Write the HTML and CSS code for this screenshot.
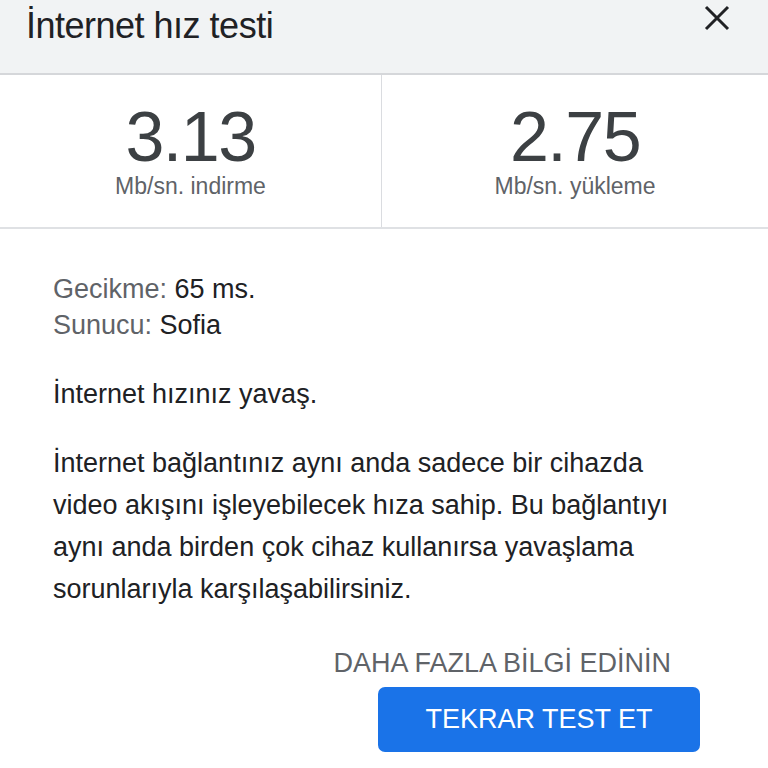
FILE: index.html
```html
<!DOCTYPE html>
<html lang="tr">
<head>
<meta charset="utf-8">
<link rel="stylesheet" href="styles.css">
</head>
<body>
<div class="dialog">
  <header class="head">
    <h1 class="title">İnternet hız testi</h1>
    <button class="close" aria-label="Kapat">
      <svg width="26" height="26" viewBox="0 0 26 26"><path d="M2 2 L24 24 M24 2 L2 24" stroke="#202124" stroke-width="3" fill="none"/></svg>
    </button>
  </header>
  <section class="stats">
    <div class="stat">
      <div class="num">3.13</div>
      <div class="unit">Mb/sn. indirme</div>
    </div>
    <div class="stat">
      <div class="num">2.75</div>
      <div class="unit">Mb/sn. yükleme</div>
    </div>
  </section>
  <section class="body">
    <div class="meta">
      <div><span class="lbl">Gecikme:</span> 65 ms.</div>
      <div><span class="lbl">Sunucu:</span> Sofia</div>
    </div>
    <p class="verdict">İnternet hızınız yavaş.</p>
    <p class="desc">İnternet bağlantınız aynı anda sadece bir cihazda video akışını işleyebilecek hıza sahip. Bu bağlantıyı aynı anda birden çok cihaz kullanırsa yavaşlama sorunlarıyla karşılaşabilirsiniz.</p>
    <div class="actions">
      <a class="more">DAHA FAZLA BİLGİ EDİNİN</a>
      <button class="retry">TEKRAR TEST ET</button>
    </div>
  </section>
</div>
</body>
</html>
```
FILE: styles.css
```css
* { box-sizing: border-box; }
html, body { margin: 0; padding: 0; background: #fff; }
body { font-family: "Liberation Sans", Arial, sans-serif; color: #202124; width: 768px; height: 768px; overflow: hidden; }
.dialog { width: 768px; }
.head {
  height: 75px;
  background: #f1f3f4;
  border-bottom: 2px solid #d5d7da;
  display: flex;
  align-items: flex-start;
  justify-content: space-between;
  padding: 0 38px 0 26px;
}
.title {
  margin: 0;
  margin-top: 6px;
  font-weight: normal;
  font-size: 36px;
  line-height: 40px;
  color: #202124;
  letter-spacing: -0.5px;
}
.close {
  margin-top: 5px;
  border: 0; background: none; padding: 0;
  width: 26px; height: 26px;
}
.stats {
  display: grid;
  grid-template-columns: 381px 1fr;
  border-bottom: 2px solid #dfe1e4;
  height: 154px;
}
.stat {
  display: flex; flex-direction: column; align-items: center;
  padding-top: 26px;
}
.stat + .stat { border-left: 1px solid #dadce0; }
.num {
  font-size: 70px; line-height: 72px; color: #3c4043;
  letter-spacing: -1.5px;
}
.unit {
  font-size: 23px; line-height: 26px; color: #5f6368;
  margin-top: 0;
  letter-spacing: 0;
}
.body { padding: 42px 40px 0 53px; font-size: 27px; }
.meta { line-height: 36px; }
.lbl { color: #5f6368; }
.verdict { margin: 33px 0 0; line-height: 36px; }
.desc {
  margin: 30px 0 0; line-height: 42px;
  font-size: 27px;
  max-width: 650px;
}
.actions {
  display: flex; flex-direction: column; align-items: flex-end;
  margin-top: 38px;
}
.more { color: #5f6368; font-size: 27px; line-height: 30px; margin-right: 57px; letter-spacing: 0; }
.retry {
  margin-top: 9px;
  width: 322px; height: 65px;
  background: #1a73e8; color: #fff;
  border: 0; border-radius: 7px;
  font-family: "Liberation Sans", Arial, sans-serif;
  font-size: 27px;
  letter-spacing: 0;
  margin-right: 28px;
}
```
